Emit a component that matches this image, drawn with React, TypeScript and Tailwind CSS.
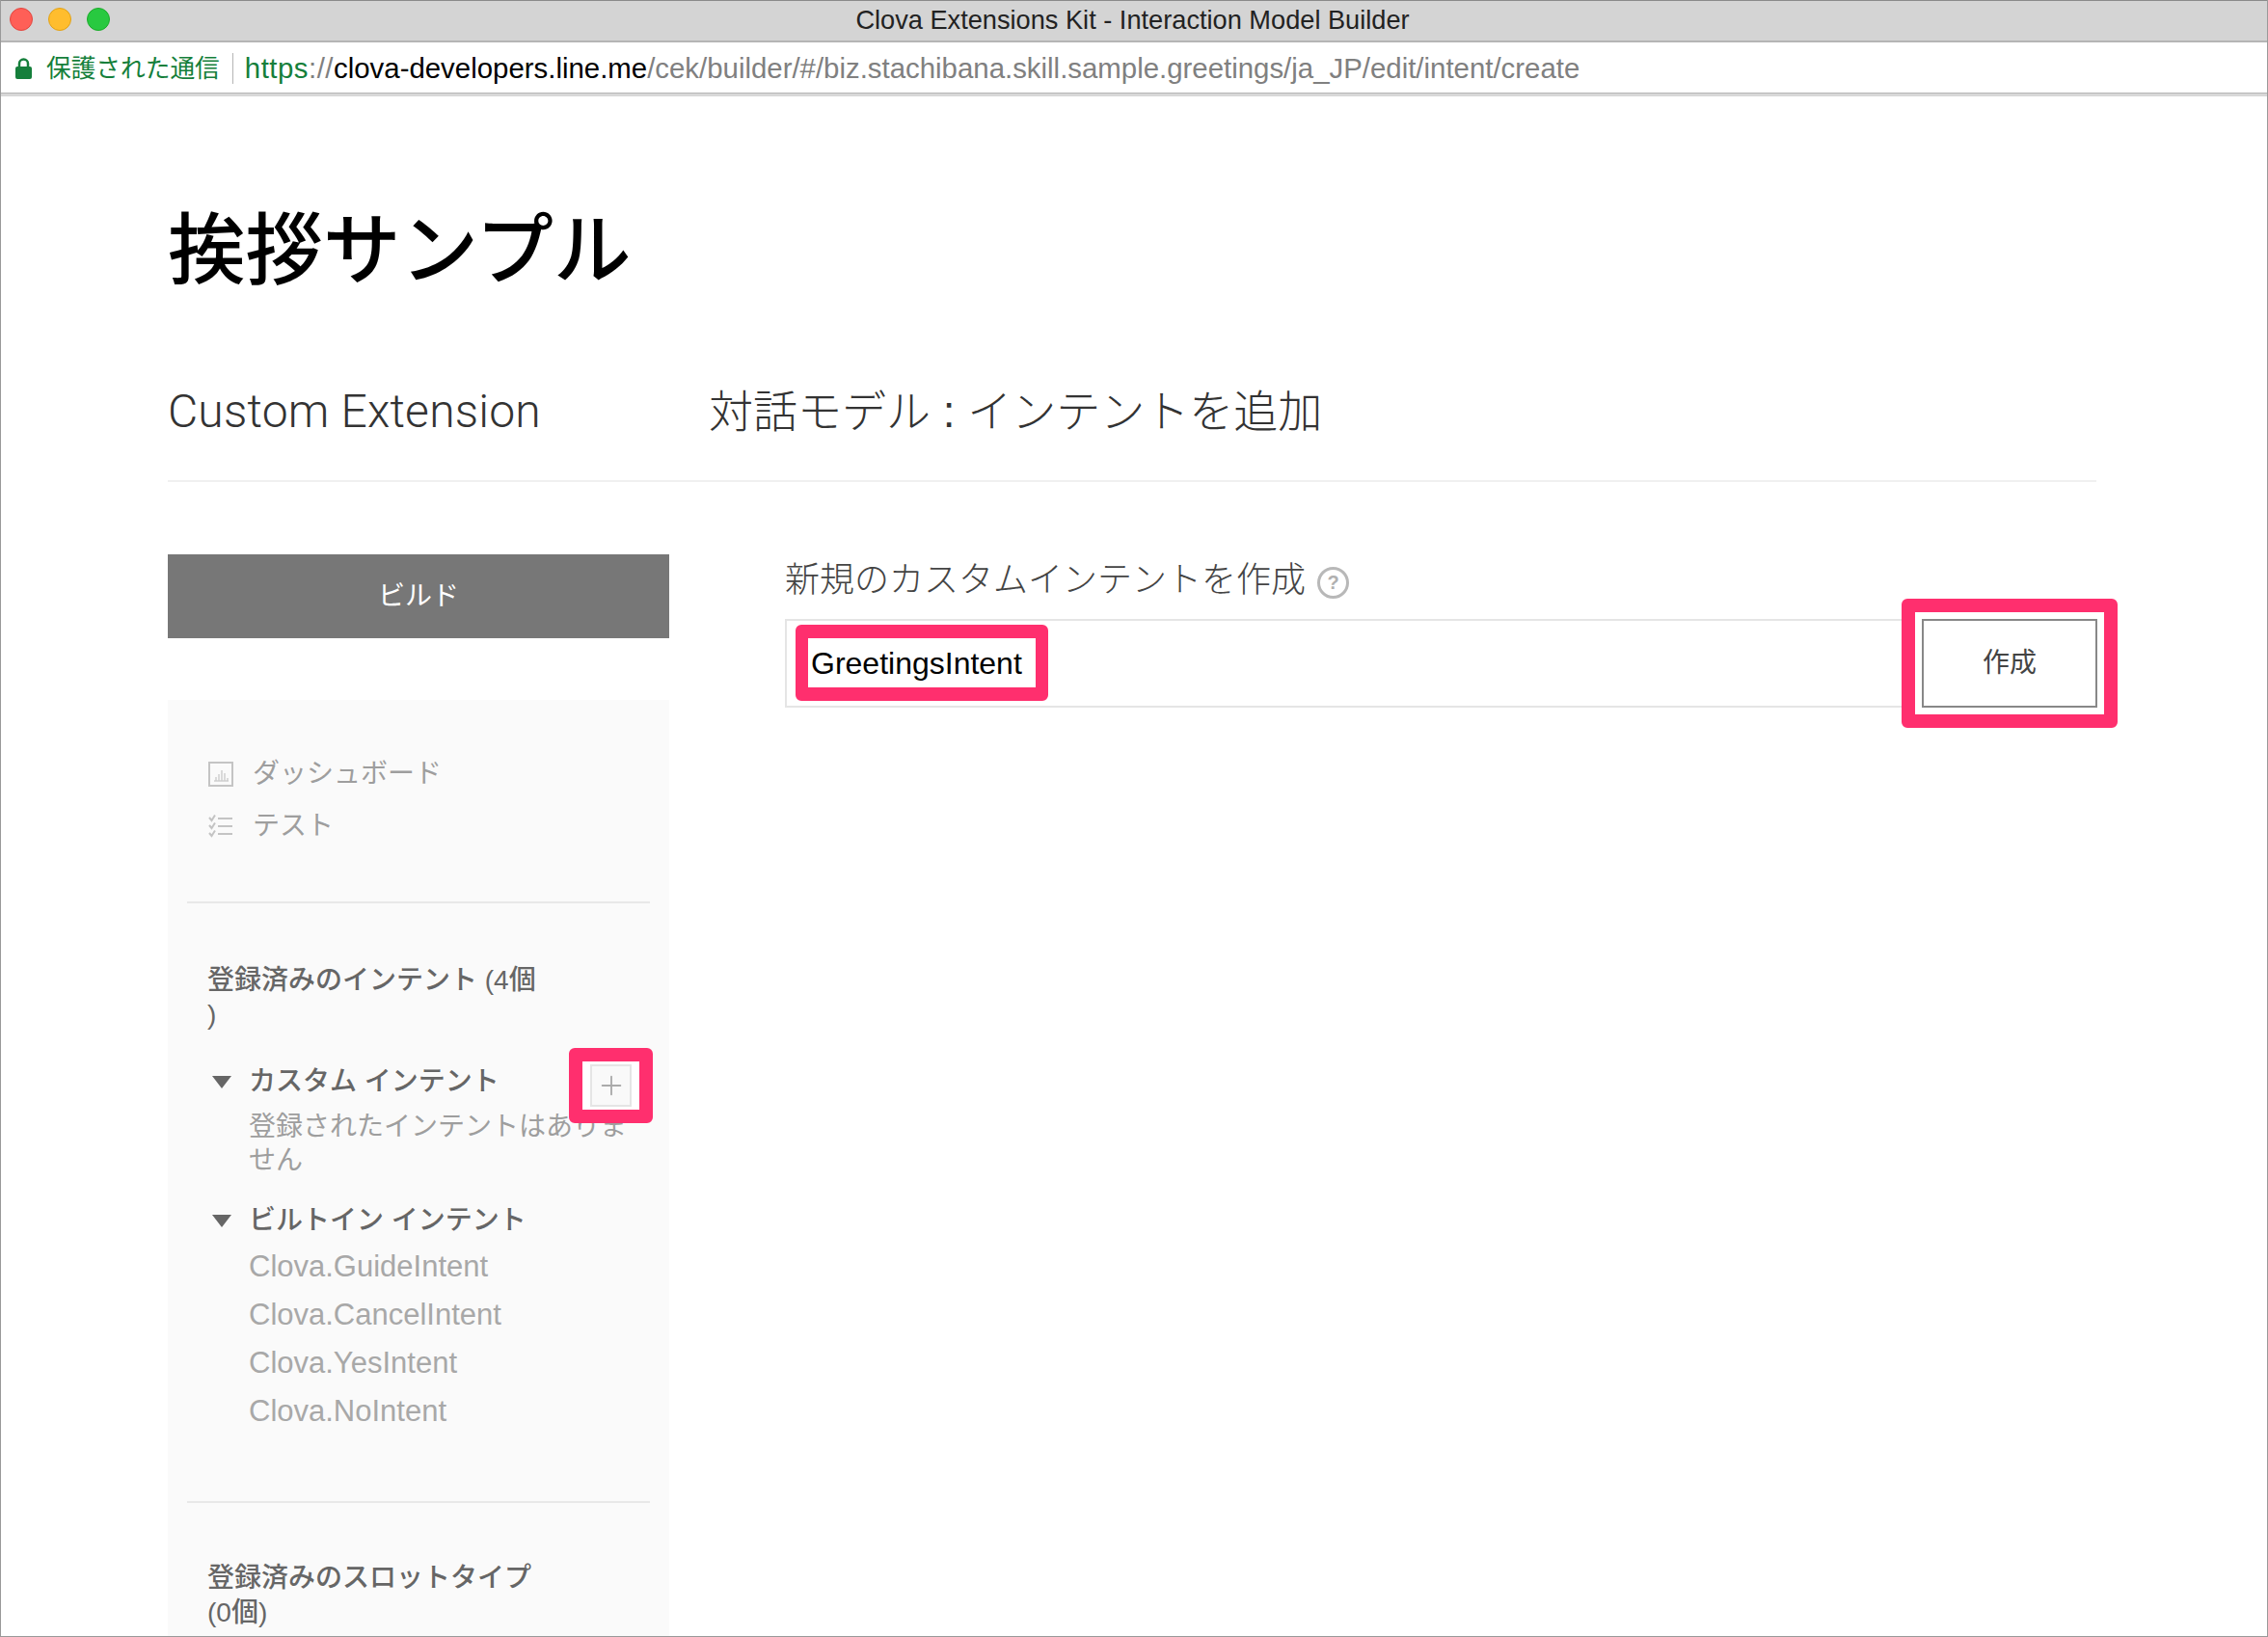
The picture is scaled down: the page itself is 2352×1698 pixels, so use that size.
import { Plus } from "lucide-react";

const builtins = ["Clova.GuideIntent", "Clova.CancelIntent", "Clova.YesIntent", "Clova.NoIntent"];

function Triangle() {
  return (
    <svg width="20" height="14" viewBox="0 0 20 14" className="shrink-0">
      <path d="M0 1h20L10 14z" fill="#666" />
    </svg>
  );
}

function DashboardIcon() {
  return (
    <svg width="26" height="26" viewBox="0 0 26 26" className="shrink-0">
      <rect x="1" y="1" width="24" height="24" fill="none" stroke="#c4c4c4" strokeWidth="2" />
      <path d="M6 20h15M8 20v-4M11 20v-7M14 20V9M17 20v-8M20 20v-3" fill="none" stroke="#cfcfcf" strokeWidth="1.5" />
    </svg>
  );
}

function TestIcon() {
  return (
    <svg width="26" height="24" viewBox="0 0 26 24" className="shrink-0">
      <path
        d="M1 3l2.500 3L7 0.500M1 11l2.500 3L7 8.500M1 19l2.500 3L7 16.500"
        fill="none"
        stroke="#c4c4c4"
        strokeWidth="2"
      />
      <path d="M10 4h15M10 12h15M10 20h15" fill="none" stroke="#c4c4c4" strokeWidth="2" />
    </svg>
  );
}

function Sidebar() {
  return (
    <div className="mt-[64px] bg-[#fafafa] pt-[50px] h-[1200px]">
      <div className="pl-[42px] text-[28px] text-[#9e9e9e]">
        <div className="h-[54px] flex items-center gap-[20px]">
          <DashboardIcon />
          <span>ダッシュボード</span>
        </div>
        <div className="h-[54px] flex items-center gap-[20px]">
          <TestIcon />
          <span>テスト</span>
        </div>
      </div>

      <div className="mx-[20px] mt-[51px] h-[2px] bg-[#e8e8e8]"></div>

      <div className="mt-[62px] pl-[41px] w-[391px] text-[28px] leading-[36px] font-medium text-[#666]">
        登録済みのインテント (4個 )
      </div>

      <div className="relative mt-[33px] pl-[46px] flex items-center gap-[18px] text-[28px] leading-[36px] font-medium text-[#666]">
        <Triangle />
        <span>カスタム インテント</span>
        <div className="absolute left-[416px] top-[-17px] w-[87px] h-[78px] rounded-[6px] border-[14px] border-[#ff2f6e] bg-white z-10 flex items-center justify-center">
          <div className="w-[43px] h-[44px] border-2 border-[#e5e5e5] bg-[#f9f9f9] flex items-center justify-center">
            <Plus size={32} strokeWidth={1.4} color="#aaa" />
          </div>
        </div>
      </div>
      <div className="mt-[11px] ml-[84px] w-[400px] text-[28px] leading-[35px] text-[#9e9e9e]">
        登録されたインテントはありません
      </div>

      <div className="mt-[27px] pl-[46px] flex items-center gap-[18px] text-[28px] leading-[36px] font-medium text-[#666]">
        <Triangle />
        <span>ビルトイン インテント</span>
      </div>
      <div className="mt-[5px] ml-[84px] text-[31px] text-[#a8a8a8]">
        {builtins.map((name) => (
          <div key={name} className="h-[50px] flex items-center">
            {name}
          </div>
        ))}
      </div>

      <div className="mx-[20px] mt-[68px] h-[2px] bg-[#e8e8e8]"></div>

      <div className="mt-[60px] pl-[41px] w-[391px] text-[28px] leading-[36px] font-medium text-[#666]">
        登録済みのスロットタイプ (0個)
      </div>
    </div>
  );
}

function CreateForm() {
  return (
    <div className="ml-[120px] flex-1">
      <div className="h-[54px] flex items-center gap-[12px] text-[36px] font-light text-[#444]">
        <span>新規のカスタムインテントを作成</span>
        <span className="w-[33px] h-[33px] mt-[4px] rounded-full border-[3px] border-[#b8b8b8] flex items-center justify-center text-[20px] font-bold text-[#b0b0b0]">
          ?
        </span>
      </div>
      <div className="relative mt-[13px] h-[92px] border-2 border-[#e5e5e5] flex justify-end">
        <div className="absolute left-[9px] top-[4px] w-[262px] h-[79px] pl-[3px] rounded-[6px] border-y-[14px] border-x-[13px] border-[#ff2f6e] bg-white flex items-center text-[32px] text-black">
          GreetingsIntent
        </div>
        <div className="absolute right-[-24px] top-[-23px] w-[224px] h-[134px] rounded-[6px] border-[14px] border-[#ff2f6e] bg-white flex items-center justify-center">
          <div className="w-[182px] h-[92px] border-2 border-[#888] flex items-center justify-center text-[28px] text-[#444]">
            作成
          </div>
        </div>
      </div>
    </div>
  );
}

export default function App() {
  return (
    <div className="font-['Liberation_Sans','Noto_Sans_CJK_JP',sans-serif] w-[2352px] h-[1698px] overflow-hidden bg-white border-x border-b border-[#999]">
      <div className="relative h-[44px] pr-[3px] bg-[#d4d4d4] border-t border-b-2 border-t-[#8a8a8a] border-b-[#b5b5b5] flex items-center justify-center">
        <div className="absolute left-[9px] top-[7px] flex gap-[16px]">
          <span className="w-[24px] h-[24px] rounded-full bg-[#ff5f57] border border-[#e2463f]"></span>
          <span className="w-[24px] h-[24px] rounded-full bg-[#ffbd2e] border border-[#e1a116]"></span>
          <span className="w-[24px] h-[24px] rounded-full bg-[#28c940] border border-[#1aab29]"></span>
        </div>
        <span className="text-[27.2px] text-[#222]">Clova Extensions Kit - Interaction Model Builder</span>
      </div>
      <div className="h-[52px] flex items-center pl-[14px] pt-[2px] bg-white text-[29.4px]">
        <svg width="19" height="24" viewBox="0 0 19 24" className="shrink-0">
          <path d="M5 11V7a4.500 4.500 0 0 1 9 0v4" fill="none" stroke="#157f3b" strokeWidth="2.500" />
          <rect x="1" y="10" width="17" height="13" rx="2" fill="#157f3b" />
        </svg>
        <span className="ml-[14px] text-[25.7px] text-[#157f3b]">保護された通信</span>
        <span className="ml-[13px] h-[32px] w-px bg-[#b5b5b5]"></span>
        <span className="ml-[12px] whitespace-nowrap">
          <span className="text-[#157f3b] tracking-[0.5px]">https</span>
          <span className="text-[#808080] tracking-[0.5px]">://</span>
          <span className="text-black">clova-developers.line.me</span>
          <span className="text-[#808080]">/cek/builder/#/biz.stachibana.skill.sample.greetings/ja_JP/edit/intent/create</span>
        </span>
      </div>
      <div className="h-[4px] bg-[#d8d8d8] border-t border-[#b5b5b5]"></div>

      <div className="pl-[173px] w-[2173px]">
        <h1 className="mt-[112px] text-[80.5px] leading-[96px] font-medium text-black">挨拶サンプル</h1>
        <div className="mt-[89px] h-[103px] pb-[43px] border-b-2 border-[#f0f0f0] flex leading-[60px] font-light text-[#333]">
          <div className="w-[561px] text-[48px] tracking-[0.2px] font-['Roboto',sans-serif]">Custom Extension</div>
          <div className="text-[46px]">対話モデル : インテントを追加</div>
        </div>
        <div className="mt-[75px] flex">
          <div className="w-[520px] shrink-0">
            <div className="h-[87px] bg-[#777] flex items-center justify-center text-[28px] text-white">ビルド</div>
            <Sidebar />
          </div>
          <CreateForm />
        </div>
      </div>
    </div>
  );
}
